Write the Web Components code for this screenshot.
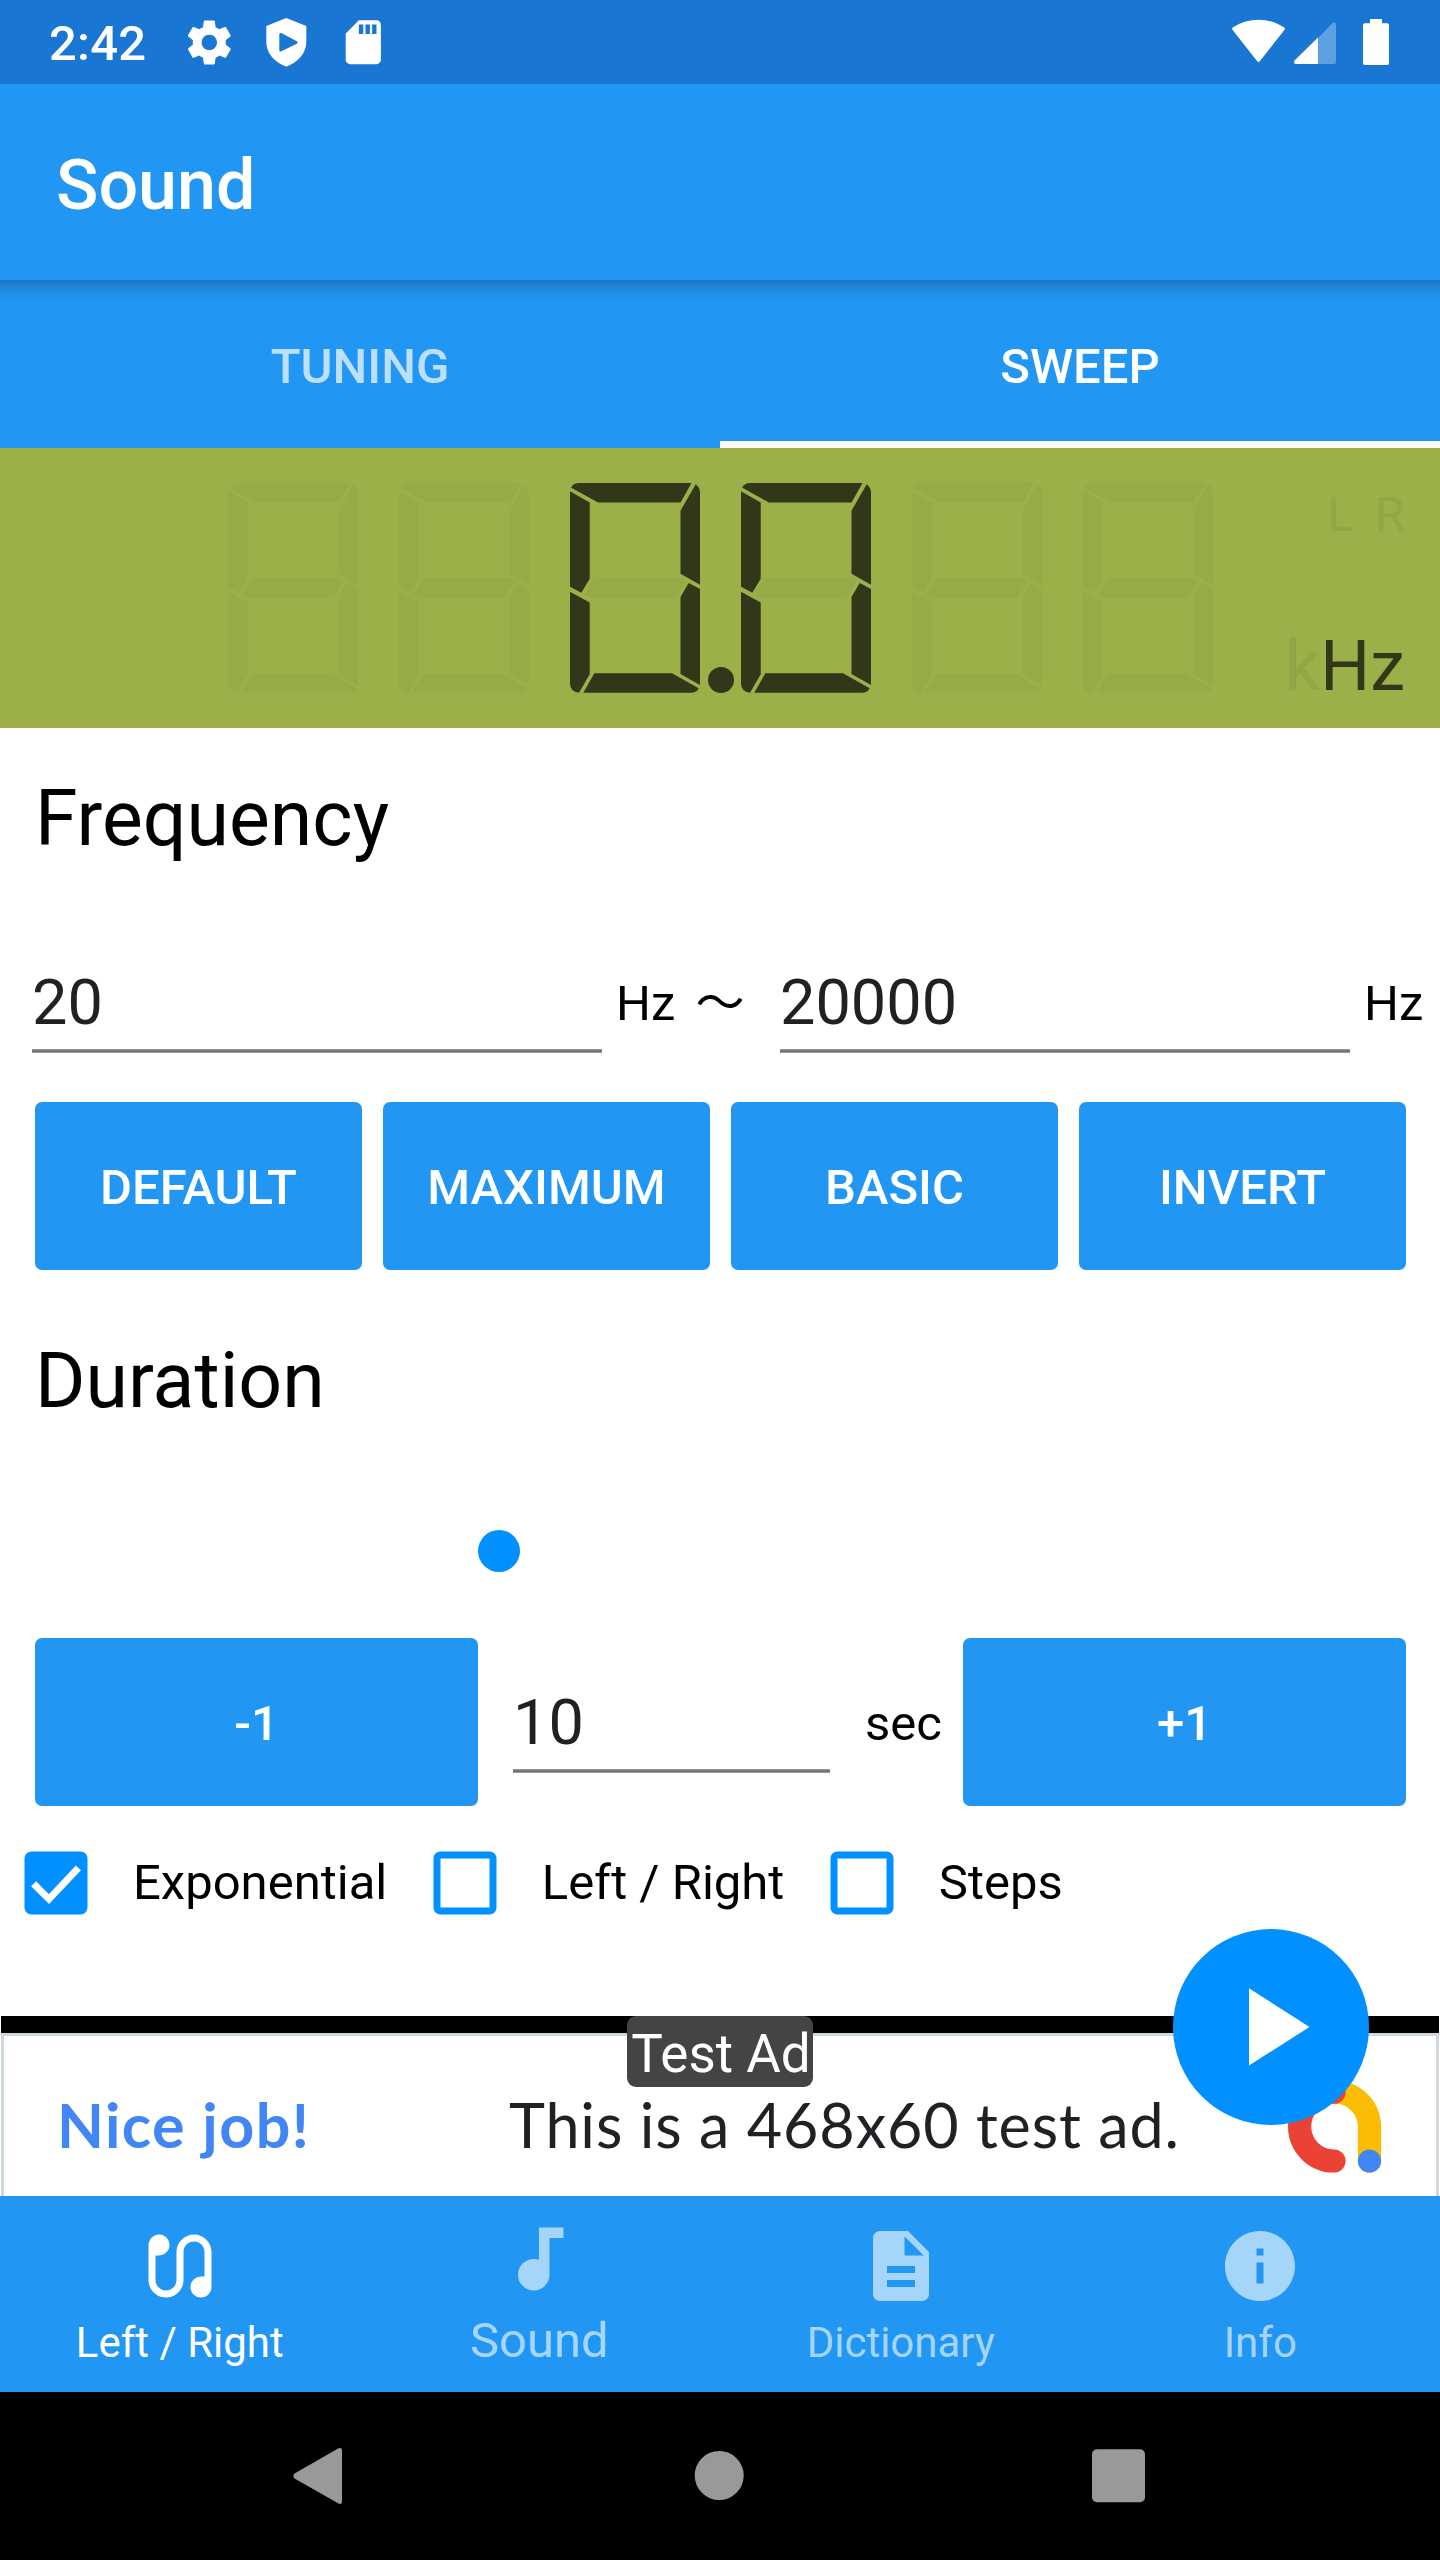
<!DOCTYPE html>
<html lang="en">
<head>
<meta charset="utf-8">
<title>Sound</title>
<style>
html,body{margin:0;padding:0;background:#fff}
body{font-family:Roboto,"Noto Sans CJK JP",sans-serif;width:1440px}
</style>
</head>
<body>
<sound-app></sound-app>
<script>
const define = (name, render) => customElements.define(name, class extends HTMLElement {
  connectedCallback() {
    if (this.shadowRoot) return;
    this.attachShadow({ mode: 'open' }).innerHTML = render(this);
  }
});

/* ---- status bar ---- */
define('status-bar', () => `
<style>
:host{display:flex;box-sizing:border-box;height:84px;background:#1976d2;color:#fff;padding:0 51px 0 49px;justify-content:space-between}
.l,.r{display:flex}
.t{font:500 49px/84px Roboto,sans-serif;width:134px;padding-top:2px;white-space:nowrap;letter-spacing:.2px}
svg{display:block;fill:#fff}
</style>
<div class="l">
  <span class="t">2:42</span>
  <svg width="53" height="84" viewBox="0 0 53 84"><g transform="translate(-.1 16) scale(2.2)"><path d="M19.43 12.98c.04-.32.07-.64.07-.98s-.03-.66-.07-.98l2.11-1.65c.19-.15.24-.42.12-.64l-2-3.46c-.12-.22-.39-.3-.61-.22l-2.49 1c-.52-.4-1.08-.73-1.69-.98l-.38-2.65C14.46 2.18 14.25 2 14 2h-4c-.25 0-.46.18-.49.42l-.38 2.65c-.61.25-1.17.59-1.69.98l-2.49-1c-.23-.09-.49 0-.61.22l-2 3.46c-.13.22-.07.49.12.64l2.11 1.65c-.04.32-.07.65-.07.98s.03.66.07.98l-2.11 1.65c-.19.15-.24.42-.12.64l2 3.46c.12.22.39.3.61.22l2.49-1c.52.4 1.08.73 1.69.98l.38 2.65c.03.24.24.42.49.42h4c.25 0 .46-.18.49-.42l.38-2.65c.61-.25 1.17-.59 1.69-.98l2.49 1c.23.09.49 0 .61-.22l2-3.46c.12-.22.07-.49-.12-.64l-2.11-1.65zM12 15.5c-1.93 0-3.5-1.57-3.5-3.5s1.57-3.5 3.5-3.5 3.5 1.57 3.5 3.5-1.57 3.5-3.5 3.5z"/></g></svg>
  <svg width="100" height="84" viewBox="236 0 100 84"><path fill-rule="evenodd" d="M286.3 18l20 8v16c0 11-8 20-20 24.700c-12-4.700-20-13.700-20-24.700V26zM279.300 34.500v15.500q0 2.200 2 1.200l15.500-7.500q1.800-1.200 0-2.400l-15-8q-2.500-1-2.500 1.200z"/></svg>
  <svg width="53" height="84" viewBox="336 0 53 84"><g transform="translate(336.900 15.800) scale(2.200)"><path d="M18 2h-8L4.020 8 4 20c0 1.100.9 2 2 2h12c1.100 0 2-.9 2-2V4c0-1.100-.9-2-2-2zm-6 6.300h-2V4h2v4.300zm3 0h-2V4h2v4.300zm3 0h-2V4h2v4.300z"/></g></svg>
</div>
<svg class="r" width="158" height="84" viewBox="1231 0 158 84">
  <path d="M1233 30.500q-2-2 .5-3.500q11.500-7.300 25-7.300t25 7.300q2.500 1.500.5 3.500l-24 30.500q-1.500 2-3 0z"/>
  <path fill-opacity=".3" d="M1318 38l14.500-15q1.500-1.500 3.500.5V62q0 2-2 2h-16z"/>
  <path d="M1318 37.500V64h-22.500q-2.500-1-1-3.500z"/>
  <path d="M1370 19h12v4.300h5.200q1.800 0 1.800 1.700v38.200q0 1.800-1.800 1.800h-22.400q-1.800 0-1.800-1.800V25q0-1.700 1.800-1.700h5.200z"/>
</svg>`);

/* ---- app bar ---- */
define('app-bar', () => `
<style>
:host{display:block;box-sizing:border-box;height:196px;padding:6px 56px 0;background:#2196f3;color:#fff;font:500 70px/190px Roboto,sans-serif}
div{height:190px}
</style><div><slot></slot></div>`);

/* ---- tabs ---- */
define('tab-strip', () => `
<style>:host{display:flex;height:168px;background:linear-gradient(#1b75bd 0,#1c7dcb 4px,#1f8be1 10px,#2196f3 20px)}</style><slot></slot>`);
define('tab-item', () => `
<style>
:host{flex:1;box-sizing:border-box;text-align:center;padding-top:5px;height:168px;font:500 49px/163px Roboto,sans-serif;color:rgba(255,255,255,.7)}
:host([selected]){color:#fff;border-bottom:7px solid #fff}
</style><slot></slot>`);

/* ---- seven-segment display ---- */
const SEG = {
  a:'M1.300 4.200Q4 0 9 0H121.500L110.500 19.500H28L1.300 4.800z',
  b:'M125.700 1.300Q130 4.500 130 9.500V101.700L110.500 90.700V27.700z',
  c:'M118.700 100L130 106V202L110.500 191V114z',
  d:'M24.300 190.300H102L128.700 205.300Q127 209.700 120.500 209.700H13.300z',
  e:'M0 108.700L19.700 119.500V191.200L9 209.700Q0 208.500 0 200.500z',
  f:'M0 8.300L19.700 19.500V95.700L11.300 109.700L0 103.700z',
  g:'M24.300 95.300H110.700L115.300 98L106 114.300H19.300L15 112z'
};
define('seven-segment', el => {
  const lit = el.getAttribute('lit') || '';
  return `<style>:host{display:block;width:130px;height:210px}svg{display:block}path{fill:#97aa48}.on{fill:#323719}</style>
  <svg width="130" height="210" viewBox="0 0 130 210">${Object.keys(SEG).map(k => `<path class="${lit.includes(k) ? 'on' : ''}" d="${SEG[k]}"/>`).join('')}</svg>`;
});
define('lcd-panel', () => `
<style>
:host{display:flex;box-sizing:border-box;height:280px;background:#9cb04a;padding:35px 35px 0 228px;justify-content:space-between}
.d{display:flex;gap:41px}
.p{width:26px;height:26px;border-radius:50%;background:#323719;margin:184px -33.500px 0}
.u{display:flex;flex-direction:column;align-items:flex-end;color:#323719}
.lr{display:flex;gap:21px;font:49px/58px Roboto,sans-serif;color:#93a546;margin-top:3px}
.hz{font:70px/82px Roboto,sans-serif;margin-top:81px}
.hz i{font-style:normal;color:#93a546}
</style>
<div class="d">
<seven-segment></seven-segment><seven-segment></seven-segment>
<seven-segment lit="abcdef"></seven-segment><span class="p"></span><seven-segment lit="abcdef"></seven-segment>
<seven-segment></seven-segment><seven-segment></seven-segment>
</div>
<div class="u"><div class="lr"><span>L</span><span>R</span></div><div class="hz"><i>k</i>Hz</div></div>`);

/* ---- form controls ---- */
define('section-title', () => `
<style>:host{display:block;padding-left:35px;font:77px/90px Roboto,sans-serif;color:#000}</style><slot></slot>`);
define('edit-field', () => `
<style>
:host{display:flex;flex-direction:column;height:100px;font:63px/99px Roboto,sans-serif;color:#212121}
.v{height:96px}
.u{height:4px;background:linear-gradient(#999 0 1px,#757575 1px 3px,#999 3px)}
</style><div class="v"><slot></slot></div><div class="u"></div>`);
define('unit-label', () => `
<style>:host{display:block;font:49px/101px Roboto,"Noto Sans CJK JP",sans-serif;color:#000;white-space:nowrap;height:100px}</style><slot></slot>`);
define('push-button', () => `
<style>:host{display:block;flex:1;box-sizing:border-box;height:168px;border-radius:7px;background:#2196f3;color:#fff;text-align:center;font:500 49px/168px Roboto,sans-serif;padding-top:2px}</style><slot></slot>`);
define('check-box', el => `
<style>
:host{display:flex;align-items:center;height:84px;font:49px/84px Roboto,sans-serif;color:#000;padding:0 21.500px 0 14px;white-space:nowrap}
svg{display:block;margin-right:35px}
</style>
<svg width="84" height="84" viewBox="0 0 24 24" fill="#0090ff">${el.hasAttribute('checked')
  ? '<rect x="3" y="3" width="18" height="18" rx="2"/><path d="M5.600 12.200l4.400 4.400 8.400-8.900" fill="none" stroke="#fff" stroke-width="2"/>'
  : '<path fill-rule="evenodd" d="M19 5v14H5V5h14m0-2H5c-1.100 0-2 .9-2 2v14c0 1.100.9 2 2 2h14c1.100 0 2-.9 2-2V5c0-1.100-.9-2-2-2z"/>'}</svg><slot></slot>`);
define('range-slider', () => `
<style>:host{display:block;box-sizing:border-box;height:212px;padding:103.500px 0 0 477.500px}i{display:block;width:42px;height:42px;border-radius:50%;background:#0090ff}</style><i></i>`);

/* ---- sweep form ---- */
define('sweep-form', () => `
<style>
:host{display:block;box-sizing:border-box;height:1288px;padding-top:46px}
.f{display:flex;margin-top:89px;padding-left:32px}
.f edit-field{width:570px}
.f .a{width:164px;margin-left:14px}
.f .a span{margin-left:8px}
.f .b{margin-left:14px}
.bs{display:flex;gap:21px;padding:0 34px 0 35px;margin:49px 0 66px}
.s{display:flex;padding:0 34px 0 35px}
.s push-button{flex:none;width:443px}
.s edit-field{width:317px;margin:35px 0 0 35px}
.s unit-label{width:98px;margin:35px 0 0 35px}
.c{display:flex;margin-top:35px}
</style>
<section-title>Frequency</section-title>
<div class="f"><edit-field>20</edit-field><unit-label class="a">Hz <span>〜</span></unit-label><edit-field>20000</edit-field><unit-label class="b">Hz</unit-label></div>
<div class="bs"><push-button>DEFAULT</push-button><push-button>MAXIMUM</push-button><push-button>BASIC</push-button><push-button>INVERT</push-button></div>
<section-title>Duration</section-title>
<range-slider></range-slider>
<div class="s"><push-button>-1</push-button><edit-field>10</edit-field><unit-label>sec</unit-label><push-button>+1</push-button></div>
<div class="c"><check-box checked>Exponential</check-box><check-box>Left / Right</check-box><check-box>Steps</check-box></div>`);

/* ---- ad banner ---- */
define('ad-banner', () => `
<style>
:host{display:block;position:relative;box-sizing:border-box;height:180px;margin:0 1px;background:#000;padding-top:17px}
.b{display:flex;box-sizing:border-box;height:163px;background:#fff;border:3px solid #cfd8dc;border-bottom:0;padding-left:53px;font:61px/160px Lato,sans-serif;white-space:nowrap}
.n{width:452px;color:#4285f4;font-weight:700;letter-spacing:1.400px}
.m{width:778px;color:#202124;letter-spacing:.9px}
.n,.m{padding-top:9px;height:147px;line-height:160px}
.tag{position:absolute;left:626px;top:0;width:186px;height:71px;border-radius:9px;background:#444;color:#fff;text-align:center;font:53px/76px Roboto,sans-serif;text-indent:2px}
svg{display:block;margin-top:41px}
</style>
<div class="b"><span class="n">Nice job!</span><span class="m">This is a 468x60 test ad.</span>
<svg width="96" height="100" viewBox="1287 2077 96 100" fill="none" stroke-width="23.200" stroke-linecap="round">
<path stroke="#fbbc04" d="M1334.500 2092a35 35 0 0 1 35 35v34"/>
<path stroke="#ea4335" d="M1334 2092.200a34.300 34.300 0 0 0 0 68.800"/>
<circle cx="1369.500" cy="2161" r="11.600" fill="#4285f4"/></svg></div>
<div class="tag">Test Ad</div>`);

/* ---- play button floating over the banner ---- */
define('play-fab', () => `
<style>:host{position:absolute;left:1173px;top:1929px;width:196px;height:196px;border-radius:50%;background:#0090ff}svg{display:block}</style>
<svg width="196" height="196"><path fill="#fff" d="M76 59.300L136.500 98L76 136.500z"/></svg>`);

/* ---- bottom navigation ---- */
const ICONS = {
  earbuds:'M6.200,3.010C4.440,2.890,3,4.420,3,6.190L3,16c0,2.760,2.240,5,5,5h0c2.760,0,5-2.240,5-5V8c0-1.660,1.340-3,3-3h0c1.660,0,3,1.340,3,3v7l-0.830,0c-1.610,0-3.060,1.180-3.170,2.790C14.890,19.550,16.280,21,18,21c1.660,0,3-1.340,3-3V8c0-2.760-2.240-5-5-5h0c-2.760,0-5,2.240-5,5v8c0,1.660-1.340,3-3,3h0c-1.660,0-3-1.340-3-3V9l0.830,0C7.440,9,8.890,7.820,9,6.210C9.110,4.450,7.780,3.120,6.200,3.010z',
  note:'M12 3v9.280c-.47-.17-.97-.28-1.500-.28C8.010 12 6 14.010 6 16.500S8.010 21 10.500 21c2.310 0 4.200-1.750 4.450-4H15V6h4V3h-7z',
  doc:'M14 2H6c-1.100 0-1.990.9-1.990 2L4 20c0 1.100.89 2 1.990 2H18c1.100 0 2-.9 2-2V8l-6-6zm2 16H8v-2h8v2zm0-4H8v-2h8v2zm-3-5V3.500L18.500 9H13z',
  info:'M12 2C6.480 2 2 6.480 2 12s4.480 10 10 10 10-4.480 10-10S17.520 2 12 2zm1 15h-2v-6h2v6zm0-8h-2V7h2v2z'
};
define('nav-item', el => `
<style>
:host{display:flex;flex-direction:column;align-items:center;flex:1;box-sizing:border-box;padding-top:28px;color:rgba(255,255,255,.6);font:42px/50px Roboto,sans-serif}
:host([active]){color:#fff}
:host([large]){padding:21px 2px 0 0;font:49px/58px Roboto,sans-serif}
svg{display:block;fill:currentColor;margin-bottom:10px}
:host([large]) svg{margin-bottom:11px}
</style>
<svg width="84" height="84" viewBox="0 0 24 24"><path d="${ICONS[el.getAttribute('icon')]}"/></svg><span><slot></slot></span>`);
define('bottom-nav', () => `<style>:host{display:flex;height:196px;background:#2196f3}</style><slot></slot>`);

/* ---- system navigation ---- */
define('system-nav', () => `
<style>:host{display:flex;box-sizing:border-box;height:168px;background:#000;padding:55px 295px 0 293px;justify-content:space-between}svg{display:block;fill:#999}</style>
<svg width="50" height="58" viewBox="0 0 50 58"><path d="M45.500 1.200Q49 0 49 4V54Q49 58 45.500 56.500L1.500 31.500Q-.7 29 1.500 26.500z"/></svg>
<svg width="52" height="58" viewBox="0 0 52 58"><circle cx="27.200" cy="28.500" r="24.500"/></svg>
<svg width="53" height="58" viewBox="0 0 53 58"><rect y="2.300" width="53" height="53" rx="5"/></svg>`);

define('sound-app', () => `
<style>:host{display:block;position:relative;width:1440px;height:2560px;overflow:hidden;background:#fff}</style>
<status-bar></status-bar>
<app-bar>Sound</app-bar>
<tab-strip><tab-item>TUNING</tab-item><tab-item selected>SWEEP</tab-item></tab-strip>
<lcd-panel></lcd-panel>
<sweep-form></sweep-form>
<ad-banner></ad-banner>
<bottom-nav><nav-item icon="earbuds" active>Left / Right</nav-item><nav-item icon="note" large>Sound</nav-item><nav-item icon="doc">Dictionary</nav-item><nav-item icon="info">Info</nav-item></bottom-nav>
<system-nav></system-nav>
<play-fab></play-fab>`);
</script>
</body>
</html>
